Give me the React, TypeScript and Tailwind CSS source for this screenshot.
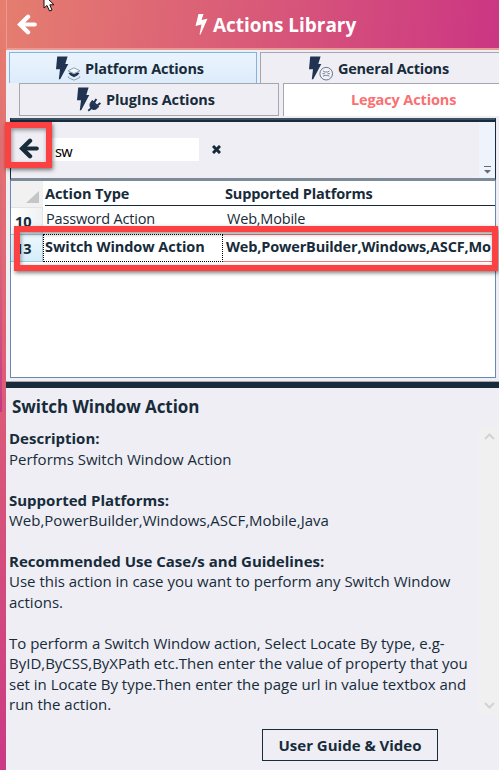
import React from "react";

type TabIcon = "layers" | "general" | "plug";

function ActionIcon({ kind }: { kind: TabIcon }) {
  return (
    <svg className="h-[26px] w-[26px] shrink-0" viewBox="0 0 26 26" fill="none">
      <path d="M2.2 0.5H12.6L10.3 8H13.3L5.2 23.3H3.8L5 13.2H1Z" fill="#203350" />
      {kind === "layers" && (
        <g stroke="#8b98aa" strokeWidth="0.9">
          <path d="M13 14.8L19 11.8L25 14.8L19 17.6Z" fill="#f3f8fd" />
          <path d="M13.3 20.2V21.6L19 24.2L24.7 21.6V20.2" />
          <path d="M13.4 17L15.5 16.6L19 18.2L22.5 16.6L24.6 17L22.7 19.3L19 21.2L15.3 19.3Z" fill="#203350" stroke="none" />
        </g>
      )}
      {kind === "general" && (
        <g stroke="#66738a" strokeWidth="1">
          <circle cx="18.2" cy="17.7" r="6.3" fill="#f2f3f7" />
          <path d="M15 15L17.2 16.2L18.2 15.7L19.2 16.2L21.4 15M15 20.3L17.2 19.2L18.2 19.8L19.2 19.2L21.4 20.3M14.5 17.7H16.8M19.6 17.7H21.9" strokeWidth="0.9" />
        </g>
      )}
      {kind === "plug" && (
        <g stroke="#203350">
          <path d="M15.2 14.8L21.6 20.8C19.7 23 17 22.9 15.4 21.5C13.5 19.7 13.4 17 15.2 14.8Z" fill="#203350" />
          <path d="M15.3 21.3L12.2 23.8" strokeWidth="1.8" />
          <path d="M17.4 16.6L20.4 12M20.3 19.3L24.4 16M15.6 13.7L22.6 20.3" strokeWidth="2" />
        </g>
      )}
    </svg>
  );
}

function BackArrow({ className }: { className: string }) {
  return (
    <svg className={className} viewBox="0 0 20 21" fill="none" stroke="currentColor">
      <path d="M11 2.8L3.2 10.5L11 18.2" strokeWidth="4.4" strokeLinecap="round" strokeLinejoin="miter" />
      <path d="M4 10.5H17.8" strokeWidth="4" strokeLinecap="round" />
    </svg>
  );
}

const guideLines = [
  "To perform a Switch Window action, Select Locate By type, e.g-",
  "ByID,ByCSS,ByXPath etc.Then enter the value of property that you",
  "set in Locate By type.Then enter the page url in value textbox and",
  "run the action.",
];

function Chevron({ down = false }: { down?: boolean }) {
  return (
    <svg className="h-[7px] w-[11px]" viewBox="0 0 11 7" fill="none" stroke="#d2d3d5" strokeWidth="2">
      <path d={down ? "M1 1L5.5 5.5L10 1" : "M1 6L5.5 1.5L10 6"} />
    </svg>
  );
}

export default function App() {
  return (
    <div className="relative flex h-[770px] w-[499px] overflow-hidden bg-[#eeeef4] font-['Open_Sans',sans-serif] text-[15px] text-[#172b3a]">
      <aside className="h-full w-[6px] shrink-0 bg-linear-to-b from-[#e77f6e] via-[#d95778] via-[58%] to-[#cb3885]">
        <div className="h-[412px] w-[2px] bg-linear-to-b from-[#e77f6e] via-[#dc6478] via-60% to-[#c63787]" />
      </aside>
      <main className="flex h-full min-w-0 flex-1 flex-col">
        <header className="flex h-[50px] shrink-0 items-start border-b-2 border-l border-[#e89b94] bg-[linear-gradient(98deg,#e57d6f_0%,#dc6276_38%,#cb3683_100%)] text-white">
          <BackArrow className="mt-[14px] ml-[10px] h-[21px] w-[20px]" />
          <svg className="mt-[14px] ml-[158px] h-[21px] w-[13px]" viewBox="0 0 13 21" fill="currentColor">
            <path d="M3.5 0H8.5L6.5 6L12.5 4.8L5.5 20.5H4.5L6.5 10.5L0.5 12Z" />
          </svg>
          <h1 className="mt-[12px] ml-[5px] text-[19px] leading-[27px] font-bold tracking-[-0.03px] whitespace-nowrap">Actions Library</h1>
        </header>

        <nav className="flex h-[68px] shrink-0 flex-col pt-[2px] text-[14.5px] font-bold">
          <div className="flex h-[31px] gap-[3px] pl-[3px]">
            <div className="flex w-[248px] items-start border border-b-0 border-[#7eb4ea] bg-linear-to-b from-[#ebf4fd] to-[#dcecfb] pt-[3px] pl-[45px]">
              <ActionIcon kind="layers" />
              <span className="ml-[4px] leading-[26px] tracking-[-0.18px] whitespace-nowrap">Platform Actions</span>
            </div>
            <div className="flex flex-1 items-start border border-r-0 border-b-0 border-[#a6a7ad] pt-[3px] pl-[47px]">
              <ActionIcon kind="general" />
              <span className="ml-[4px] leading-[26px] tracking-[-0.25px] whitespace-nowrap">General Actions</span>
            </div>
          </div>
          <div className="flex h-[33px] gap-[4px] pl-[13px]">
            <div className="flex w-[260px] items-start border border-[#a6a7ad] pt-[3px] pl-[56px]">
              <ActionIcon kind="plug" />
              <span className="ml-[4px] leading-[26px] tracking-[-0.11px] whitespace-nowrap">PlugIns Actions</span>
            </div>
            <div className="flex flex-1 items-start border-t border-l border-[#a6a7ad] bg-white pt-[3px] pl-[67px] text-[#fb7070]">
              <span className="leading-[26px] tracking-[-0.13px] whitespace-nowrap">Legacy Actions</span>
            </div>
          </div>
        </nav>

        <section className="ml-[4px] flex h-[63px] w-[486px] shrink-0 flex-col border-r border-b-3 border-l border-r-[#172b3a] border-b-[#7d8b99] border-l-[#172b3a]">
          <div className="h-[4px] shrink-0 border-t border-b-2 border-t-[#3d5264] border-b-[#172b3a] bg-[#3a4f60]" />
          <div className="flex h-[56px] items-start">
            <BackArrow className="mt-[16px] ml-[8px] h-[21px] w-[20px]" />
            <div className="mt-[16px] ml-[13px] h-[23px] w-[147px] bg-white pl-[3px] font-['Noto_Sans',sans-serif] text-[14.5px] leading-[27px] tracking-[-0.6px] text-black">sw</div>
            <svg className="mt-[23px] ml-[13px] h-[9px] w-[9px]" viewBox="0 0 9 9" stroke="currentColor" strokeWidth="3">
              <path d="M1 1L8 8M8 1L1 8" />
            </svg>
            <div className="ml-auto flex h-[56px] w-[16px] items-end justify-center bg-[#eff4fc] pb-[4px]">
              <svg className="h-[8px] w-[7px]" viewBox="0 0 7 8" fill="#666b73">
                <path d="M0 0H7V1H0ZM0 4H7L3.5 7.5Z" />
              </svg>
            </div>
          </div>
        </section>

        <section className="ml-[4px] flex h-[197px] w-[486px] shrink-0 flex-col overflow-hidden border border-t-0 border-[#6889b4] bg-white text-[14.5px]">
          <div className="flex h-[26px] shrink-0">
            <div className="flex w-[32px] items-end justify-end bg-[#f1f1f2] pr-[4px] pb-[4px]">
              <svg className="h-[12px] w-[13px]" viewBox="0 0 13 12"><path d="M13 0V12H0Z" fill="#c4c5c7" /></svg>
            </div>
            <div className="ml-[2px] flex h-[25px] flex-1 border-b border-[#172b3a] leading-[26px] font-bold tracking-[-0.15px]">
              <span className="w-[180px] tracking-[-0.05px] whitespace-nowrap">Action Type</span>
              <span className="whitespace-nowrap">Supported Platforms</span>
            </div>
          </div>
          <div className="flex h-[27px] shrink-0 leading-[23px]">
            <div className="w-[32px] border-t border-r border-[#e1e3e6] bg-linear-to-r from-white to-[#f0f1f3] pl-[4px] leading-[27px] font-bold">10</div>
            <span className="w-[180px] pl-[3px] tracking-[-0.18px] whitespace-nowrap">Password Action</span>
            <span className="pl-[4px] tracking-[-0.2px]">Web,Mobile</span>
          </div>
          <div className="flex h-[28px] shrink-0 leading-[24px] font-bold">
            <div className="w-[32px] border-y border-r border-[#a3c9e0] bg-linear-to-b from-[#eef8fd] to-[#d4edfa] pl-[4px] leading-[27px]">13</div>
            <span className="w-[180px] border border-dotted border-black pl-[1px] tracking-[-0.06px] whitespace-nowrap">Switch Window Action</span>
            <span className="flex-1 border-y border-[#ef7777] pl-[3px] tracking-[-0.16px] whitespace-nowrap">Web,PowerBuilder,Windows,ASCF,Mo</span>
          </div>
        </section>

        <div className="mt-[3px] h-[7px] shrink-0 border-t border-[#a6a8ad] bg-[#172b3a]" />

        <section className="flex min-h-0 flex-1 flex-col">
          <h2 className="mt-[7px] ml-[6px] h-[31px] text-[17px] leading-[24px] font-bold tracking-[-0.06px]">Switch Window Action</h2>
          <div className="flex h-[289px] shrink-0">
            <div className="flex-1 pt-[2.4px] pl-[3px] leading-[20.43px] whitespace-nowrap">
              <p className="font-bold">Description:</p>
              <p>Performs Switch Window Action</p>
              <p className="mt-[20.43px] font-bold">Supported Platforms:</p>
              <p>Web,PowerBuilder,Windows,ASCF,Mobile,Java</p>
              <p className="mt-[20.43px] font-bold">Recommended Use Case/s and Guidelines:</p>
              <p>Use this action in case you want to perform any Switch Window</p>
              <p>actions.</p>
              <div className="mt-[20.43px]">{guideLines.map((line) => <p key={line}>{line}</p>)}</div>
            </div>
            <div className="flex w-[20px] shrink-0 flex-col items-center justify-between bg-[#f0f0f0] pt-[7px] pb-[6px]">
              <Chevron /><Chevron down />
            </div>
          </div>
          <button className="mt-[14px] ml-[256px] h-[32px] w-[176px] border border-[#172b3a] leading-[30px] font-bold">User Guide &amp; Video</button>
        </section>
      </main>

      <div className="absolute top-[122px] left-[5px] h-[46px] w-[47px] border-6 border-[#fb4141] shadow-[1px_2px_4px_rgba(0,0,0,0.5),inset_1px_2px_4px_rgba(0,0,0,0.4)]" />
      <div className="absolute top-[226px] left-[14px] h-[45px] w-[484px] border-6 border-[#fb4141] shadow-[1px_2px_4px_rgba(0,0,0,0.5),inset_1px_2px_4px_rgba(0,0,0,0.4)]" />
      <svg className="absolute top-0 left-[43px] h-[13px] w-[13px]" viewBox="0 0 13 13">
        <path d="M1 -4V8L4 5.5L6.5 11L9 10L6.8 4.8H11L2 -4Z" fill="white" stroke="#111" strokeWidth="1" />
      </svg>
    </div>
  );
}
